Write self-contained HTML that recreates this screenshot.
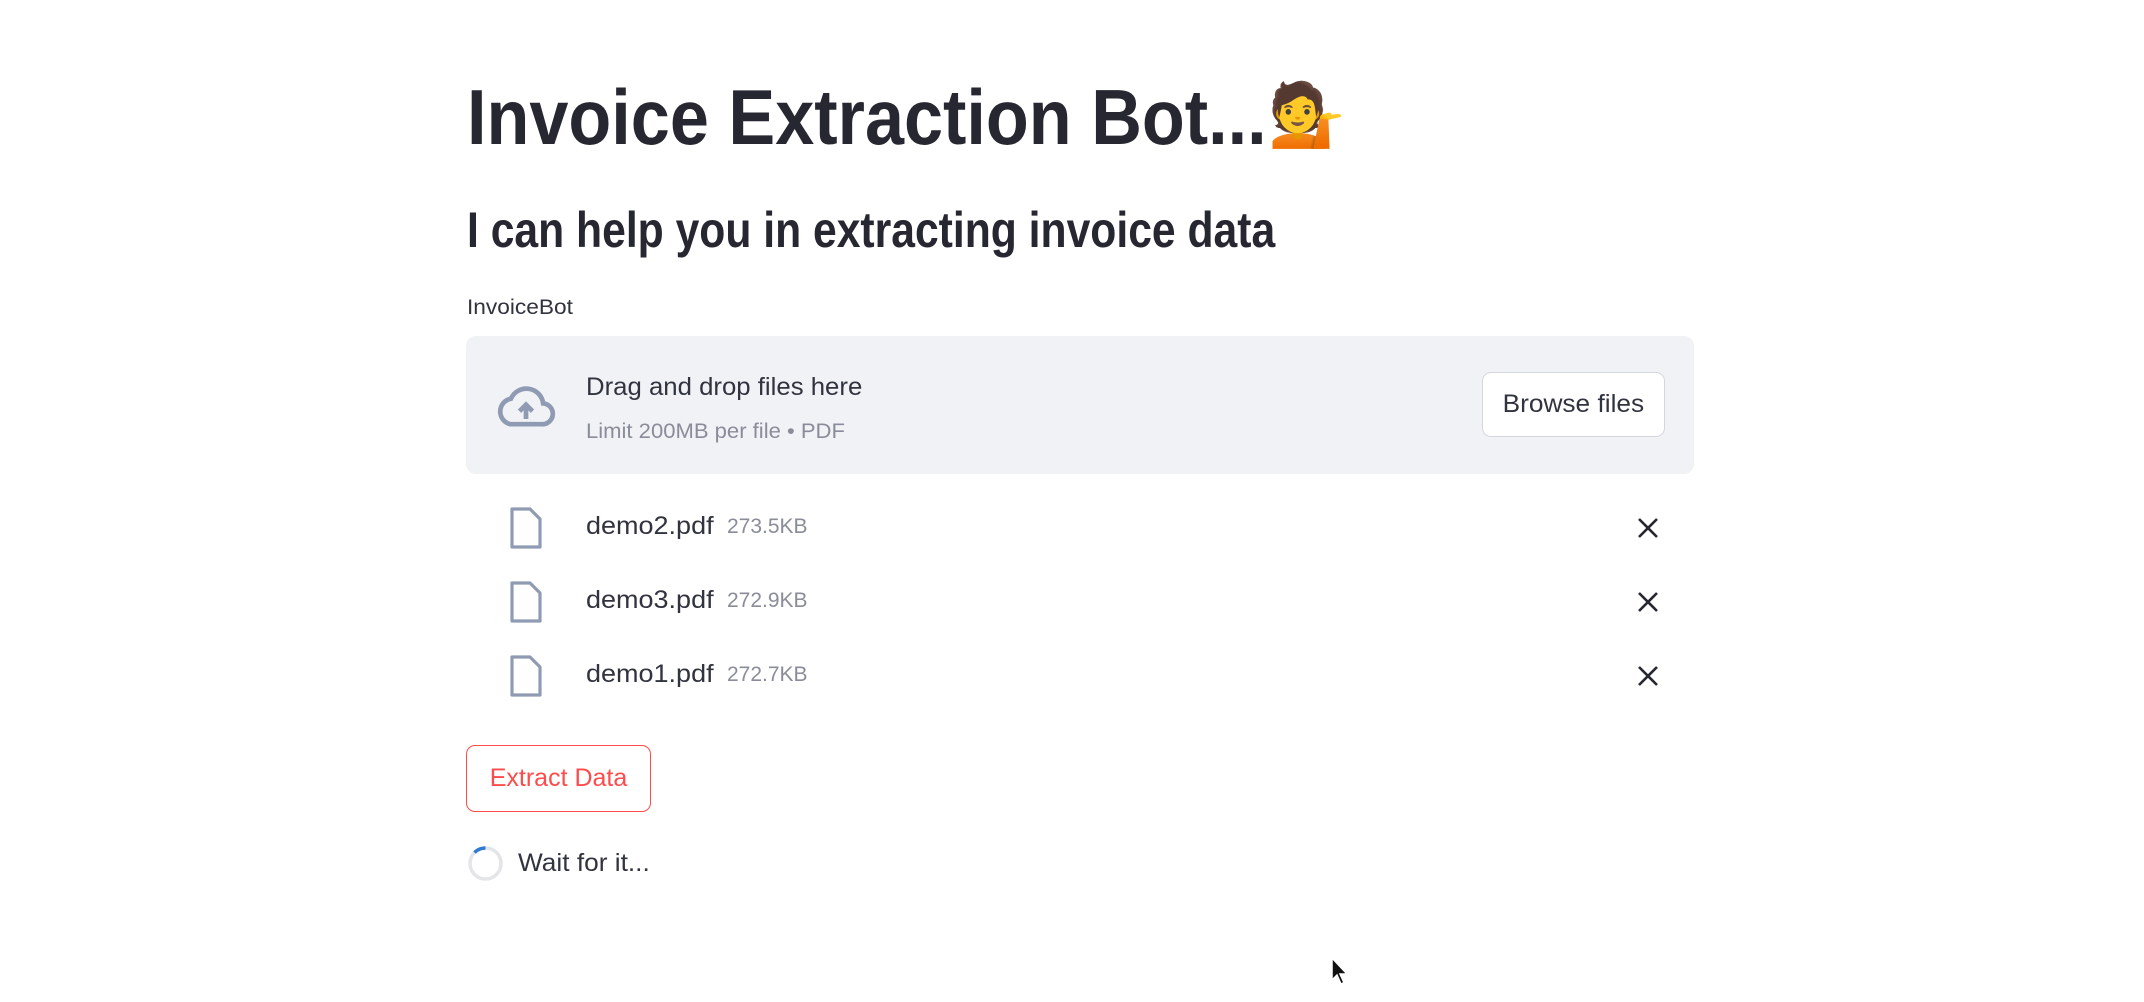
<!DOCTYPE html>
<html><head><meta charset="utf-8"><style>
html,body{margin:0;padding:0;width:2144px;height:1002px;background:#fff;overflow:hidden;font-family:"Liberation Sans",sans-serif;color:#31333f}
.a{position:absolute;white-space:nowrap}
.sx{display:inline-block;transform-origin:0 0}
</style></head><body>
<div class="a" style="left:467px;top:72px;font-size:78px;font-weight:bold;color:#262730;line-height:90px"><span class="sx" style="transform:scaleX(0.90)">Invoice Extraction Bot...</span></div>
<div class="a" style="left:1268px;top:76px;font-size:62px;line-height:80px">💁</div>
<div class="a" style="left:467px;top:200px;font-size:50px;font-weight:bold;color:#262730;line-height:60px"><span class="sx" style="transform:scaleX(0.853)">I can help you in extracting invoice data</span></div>
<div class="a" style="left:467px;top:295px;font-size:21px;line-height:26px"><span class="sx" style="transform:scaleX(1.08)">InvoiceBot</span></div>
<div class="a" style="left:466px;top:336px;width:1228px;height:138px;background:#f0f2f6;border-radius:10px"></div>
<svg class="a" style="left:494px;top:380px" width="64" height="52" viewBox="0 0 24 20"><path d="M6 17h12a4 4 0 0 0 .6-8A6.5 6.5 0 0 0 6.2 7.2 5 5 0 0 0 6 17z" fill="none" stroke="#8f9bb3" stroke-width="1.8"/><path d="M12 15V9.5M9.5 12l2.5-2.5 2.5 2.5" fill="none" stroke="#8f9bb3" stroke-width="1.8"/></svg>
<div class="a" style="left:586px;top:372px;font-size:25px;line-height:30px"><span class="sx" style="transform:scaleX(1.03)">Drag and drop files here</span></div>
<div class="a" style="left:586px;top:419px;font-size:21px;line-height:26px;color:#8a8d99"><span class="sx" style="transform:scaleX(1.05)">Limit 200MB per file • PDF</span></div>
<div class="a" style="left:1482px;top:372px;width:183px;height:65px;background:#fff;border:1px solid #d5d7de;border-radius:9px;box-sizing:border-box;text-align:center;line-height:63px;font-size:25px"><span class="sx" style="transform:scaleX(1.05);transform-origin:50% 0">Browse files</span></div>
<svg class="a" style="left:508px;top:507px" width="36" height="42" viewBox="0 0 18 21"><path d="M2 1h9l5 5v14H2z" fill="none" stroke="#8f9bb3" stroke-width="1.6" stroke-linejoin="round"/></svg>
<svg class="a" style="left:508px;top:581px" width="36" height="42" viewBox="0 0 18 21"><path d="M2 1h9l5 5v14H2z" fill="none" stroke="#8f9bb3" stroke-width="1.6" stroke-linejoin="round"/></svg>
<svg class="a" style="left:508px;top:655px" width="36" height="42" viewBox="0 0 18 21"><path d="M2 1h9l5 5v14H2z" fill="none" stroke="#8f9bb3" stroke-width="1.6" stroke-linejoin="round"/></svg>
<div class="a" style="left:586px;top:511px;font-size:25px;line-height:30px"><span class="sx" style="transform:scaleX(1.08)">demo2.pdf</span></div>
<div class="a" style="left:586px;top:585px;font-size:25px;line-height:30px"><span class="sx" style="transform:scaleX(1.08)">demo3.pdf</span></div>
<div class="a" style="left:586px;top:659px;font-size:25px;line-height:30px"><span class="sx" style="transform:scaleX(1.08)">demo1.pdf</span></div>
<div class="a" style="left:727px;top:514px;font-size:21px;line-height:26px;color:#8a8d99">273.5KB</div>
<div class="a" style="left:727px;top:588px;font-size:21px;line-height:26px;color:#8a8d99">272.9KB</div>
<div class="a" style="left:727px;top:662px;font-size:21px;line-height:26px;color:#8a8d99">272.7KB</div>
<svg class="a" style="left:1637px;top:517px" width="22" height="22"><path d="M2 2L20 20M20 2L2 20" stroke="#262730" stroke-width="2.6"/></svg>
<svg class="a" style="left:1637px;top:591px" width="22" height="22"><path d="M2 2L20 20M20 2L2 20" stroke="#262730" stroke-width="2.6"/></svg>
<svg class="a" style="left:1637px;top:665px" width="22" height="22"><path d="M2 2L20 20M20 2L2 20" stroke="#262730" stroke-width="2.6"/></svg>
<div class="a" style="left:466px;top:745px;width:185px;height:67px;border:1.5px solid #ff4b4b;border-radius:9px;box-sizing:border-box;text-align:center;line-height:64px;font-size:25px;color:#ff4b4b"><span class="sx" style="transform:scaleX(1.0);transform-origin:50% 0">Extract Data</span></div>
<svg class="a" style="left:467px;top:845px" width="37" height="37" viewBox="0 0 37 37"><circle cx="18.5" cy="18.5" r="15.5" fill="none" stroke="#e4e5e9" stroke-width="3.5"/><path d="M7.5 7.5A15.5 15.5 0 0 1 18.5 3" fill="none" stroke="#2f7ad6" stroke-width="3.5"/></svg>
<div class="a" style="left:518px;top:848px;font-size:25px;line-height:30px"><span class="sx" style="transform:scaleX(1.05)">Wait for it...</span></div>
<svg class="a" style="left:1330px;top:956px" width="20" height="30" viewBox="0 0 20 30"><path d="M2 2v22l5-5 4 9 3-1.5-4-8.5h7z" fill="#111" stroke="#fff" stroke-width="1.5"/></svg>
</body></html>
